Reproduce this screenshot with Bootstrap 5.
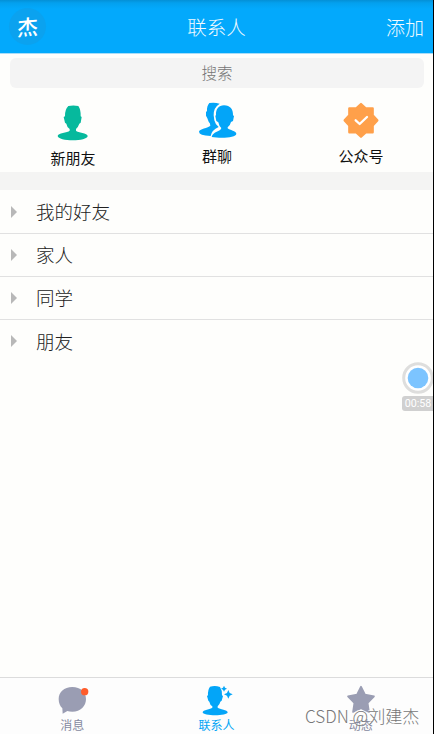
<!DOCTYPE html>
<html lang="zh-CN">
<head>
<meta charset="utf-8">
<meta name="viewport" content="width=device-width, initial-scale=1">
<title>联系人</title>
<link href="https://cdn.jsdelivr.net/npm/bootstrap@5.3.0/dist/css/bootstrap.min.css" rel="stylesheet">
<style>
body{font-family:"Noto Sans CJK SC",sans-serif;background:#000;overflow:hidden;line-height:1}
.app{width:433px;height:734px;background:#fefefc}
svg{display:block}
.top-bar{height:54px;padding:0 9px 0 9px;background:linear-gradient(#0490d6 0,#03a0ee 3px,#03a9fc 9px,#03a9fc 100%);border-bottom:1px solid #a9ddf8;color:#f2fbff;font-weight:300;font-size:19.5px}
.side{width:90px}
.add{font-size:19px}
.avatar{width:37px;height:37px;background:#0ba2ef;font-size:21px;font-weight:500;color:#fff}
.avatar span{transform:rotate(-5deg) skewX(-6deg)}
.search{height:30px;margin:4px 9px 0 10px;border-radius:6px;background:#f4f4f4;color:#757575;font-size:15.5px;font-weight:300}
.shortcuts{height:84px;padding-left:1px;color:#111;font-size:15px}
.shortcuts .cell{width:144.33px}
.gap-band{height:18px;background:#f4f4f3}
.groups{padding-top:1px}
.group{height:43px;padding-left:11px;padding-bottom:1px;border-bottom:1px solid #e1e1e1;color:#222;font-size:18.5px;font-weight:300}
.group:last-child{border:0}
.group svg{margin-right:19px}
.tabs{height:57px;border-top:1px solid #dcdcdc;color:#8589a0;font-size:12px;background:#fdfdfd}
.tabs .cell{width:144.33px}
.tabs span{margin-top:1px}
.blue{color:#03a5f5}
.recorder{right:-1px;top:362px;width:32px}
.timer{height:15px;margin-top:2px;border-radius:3px 0 0 3px;background:#d0d0d0;color:#fff;font:10.7px "Roboto",sans-serif}
.stamp{left:305px;top:706px;font-size:17.1px;line-height:20px;font-weight:300;color:#777;white-space:nowrap;text-shadow:-1px -1px 0 rgba(255,255,255,.75)}
</style>
<script src="https://cdn.jsdelivr.net/npm/bootstrap@5.3.0/dist/js/bootstrap.bundle.min.js"></script>
</head>
<body>
<div class="app position-relative overflow-hidden d-flex flex-column">
  <header class="top-bar d-flex align-items-center justify-content-between flex-shrink-0">
    <div class="side"><div class="avatar rounded-circle d-flex align-items-center justify-content-center"><span>杰</span></div></div>
    <div>联系人</div>
    <div class="side add text-end">添加</div>
  </header>
  <div class="search d-flex align-items-center justify-content-center flex-shrink-0">搜索</div>
  <nav class="shortcuts d-flex flex-shrink-0">
    <div class="cell d-flex flex-column align-items-center">
      <svg class="mt-3" width="32" height="38" viewBox="79 42 96 114" fill="#06b99d"><path d="M113 48q15-3 30 0 8 11 7 31l3 2-3 17-4 3q-4 11-10 16v5c5 6 35 7 35 16 0 17-89 17-90 0 0-9 30-10 36-16v-5q-8-5-10-16l-4-3-4-17 4-2q-1-20 10-31z"/></svg>
      <span class="mt-2">新朋友</span>
    </div>
    <div class="cell d-flex flex-column align-items-center">
      <svg class="mt-2" width="40" height="44" viewBox="51 18 120 132" fill="#03a5f8"><path d="M88 39q16-3 31 2-19 12-18 35l2 15q3 13 13 20-21 9-24 27-35-2-35-13c0-9 28-11 34-18q0-7-5-12l-4-10-4-8v-12l3-1q-1-16 7-25z"/><path d="M132 46c19 0 28 13 27 30l3 2-3 15-6 3q-3 12-10 16v3c6 6 26 8 26 16 0 13-47 14-74 10 4-18 27-15 29-27q-7-6-9-17l-6-4-3-15 2-3c-1-17 8-29 24-29z"/></svg>
      <span class="mt-2">群聊</span>
    </div>
    <div class="cell d-flex flex-column align-items-center">
      <svg class="mt-2" width="38" height="44" viewBox="68 18 114 132"><path d="M125 42l14 13h21v21l14 15-14 15v21h-21l-14 13-14-13H90v-21L76 91l14-15V55h21z" fill="#ffa04a" stroke="#ffa04a" stroke-width="7" stroke-linejoin="round"/><path d="M109 91l12 11 22-21" fill="none" stroke="#fff" stroke-width="7" stroke-linecap="round" stroke-linejoin="round"/></svg>
      <span class="mt-2">公众号</span>
    </div>
  </nav>
  <div class="gap-band flex-shrink-0"></div>
  <main class="groups flex-grow-1">
    <div class="group d-flex align-items-center"><svg width="6" height="12" viewBox="0 0 6 12" fill="#b8b8b8"><path d="M0 0l6 6-6 6z"/></svg>我的好友</div>
    <div class="group d-flex align-items-center"><svg width="6" height="12" viewBox="0 0 6 12" fill="#b8b8b8"><path d="M0 0l6 6-6 6z"/></svg>家人</div>
    <div class="group d-flex align-items-center"><svg width="6" height="12" viewBox="0 0 6 12" fill="#b8b8b8"><path d="M0 0l6 6-6 6z"/></svg>同学</div>
    <div class="group d-flex align-items-center"><svg width="6" height="12" viewBox="0 0 6 12" fill="#b8b8b8"><path d="M0 0l6 6-6 6z"/></svg>朋友</div>
  </main>
  <footer class="tabs d-flex flex-shrink-0">
    <div class="cell d-flex flex-column align-items-center">
      <svg width="40" height="40" viewBox="36 24 120 120"><path d="M97 51c25 0 41 15 41 36s-16 38-41 38q-9 0-15-2l-14 8-1-16c-7-7-11-17-11-28 0-21 16-36 41-36z" fill="#9a9db3"/><circle cx="134" cy="65" r="11" fill="#ff5c2b"/></svg>
      <span>消息</span>
    </div>
    <div class="cell d-flex flex-column align-items-center blue">
      <svg width="40" height="40" viewBox="49 24 120 120" fill="#03a5f8"><path d="M91 50q16-4 30 1 7 10 6 25l3 2-4 14-4 3q-2 9-8 14v4c6 5 30 6 30 14 0 12-75 12-75 0 0-8 24-9 29-14v-4q-7-4-9-14l-3-3-4-14 3-2q-1-17 6-26zM133 47l3 6 6 3-6 3-3 6-3-6-6-3 6-3zM146 60l4 9 9 4-9 4-4 9-4-9-9-4 9-4z"/></svg>
      <span>联系人</span>
    </div>
    <div class="cell d-flex flex-column align-items-center">
      <svg width="40" height="40" viewBox="153 24 120 120"><path d="M213 50l12 24 27 5-19 20 4 27-24-11-24 11 4-27-19-20 27-5z" fill="#9a9db3" stroke="#9a9db3" stroke-width="5" stroke-linejoin="round"/></svg>
      <span>动态</span>
    </div>
  </footer>
  <div class="recorder position-absolute">
    <svg width="32" height="32" viewBox="0 0 32 32"><circle cx="16" cy="16" r="14.3" fill="#fff" stroke="#dededd" stroke-width="3"/><circle cx="16" cy="16" r="10.3" fill="#7cc4ff"/></svg>
    <div class="timer d-flex align-items-center justify-content-center">00:58</div>
  </div>
  <div class="stamp position-absolute">CSDN @刘建杰</div>
</div>
</body>
</html>
